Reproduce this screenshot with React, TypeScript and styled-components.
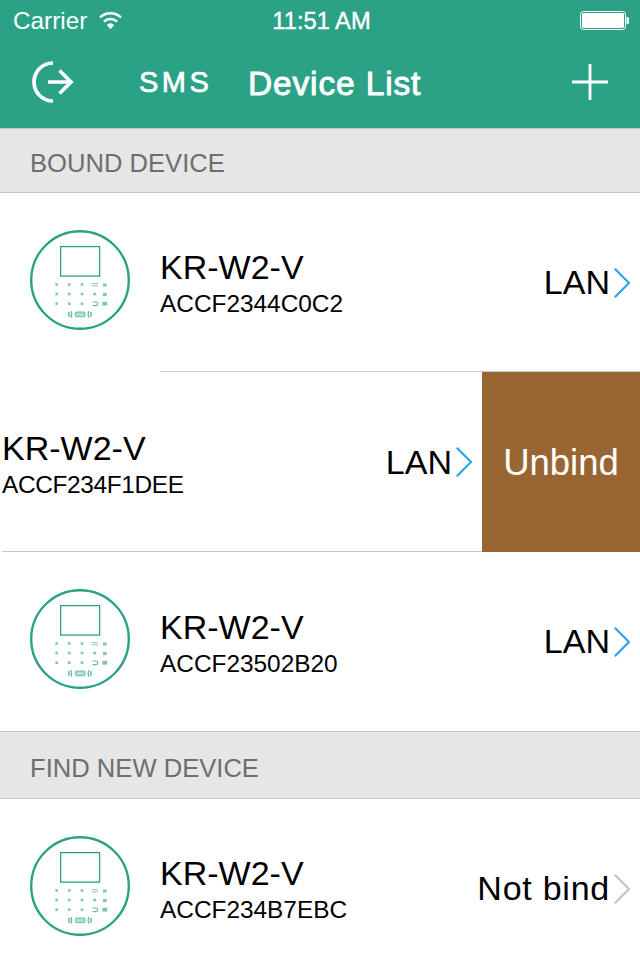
import * as React from 'react';
import styled, { createGlobalStyle } from 'styled-components';

const GlobalStyle = createGlobalStyle`
  html, body {
    margin: 0;
    padding: 0;
    background: #fff;
    font-family: "Liberation Sans", Arial, sans-serif;
  }
  * { box-sizing: border-box; }
`;

const Page = styled.div`
  width: 640px;
  height: 960px;
  overflow: hidden;
  background: #fff;
`;

const Header = styled.header`
  height: 128px;
  background: #2ba285;
  color: #fff;
  display: flex;
  flex-direction: column;
`;

const StatusBar = styled.div`
  height: 40px;
  display: grid;
  grid-template-columns: 1fr auto 1fr;
  align-items: center;
  padding: 2px 10px 0 13px;
  font-size: 24.3px;
`;

const Carrier = styled.div`
  display: flex;
  align-items: center;
  gap: 11px;
`;

const Clock = styled.div`
  font-size: 23.7px;
  -webkit-text-stroke: 0.4px #fff;
`;

const BatteryWrap = styled.div`
  justify-self: end;
  display: flex;
`;

const NavBar = styled.div`
  height: 88px;
  display: flex;
  align-items: center;
  padding: 0 32px 0 30px;
`;

const NavIcon = styled.div<{ $lift: number }>`
  display: flex;
  margin-bottom: ${p => p.$lift}px;
`;

const SmsLabel = styled.div`
  margin: 0 0 4px 65px;
  width: 110px;
  font-size: 29px;
  letter-spacing: 3.5px;
  -webkit-text-stroke: 0.7px #fff;
`;

const Title = styled.div`
  font-size: 33.5px;
  letter-spacing: 0.85px;
  flex: 1;
  margin-left: -1px;
  -webkit-text-stroke: 0.9px #fff;
`;

const SectionHead = styled.div<{ $height: number }>`
  height: ${p => p.$height}px;
  background: #e6e6e6;
  border-top: 1px solid #c8c8c8;
  border-bottom: 1px solid #c8c8c8;
  color: #6e6e6e;
  font-size: 25.6px;
  padding: 6px 0 0 30px;
  display: flex;
  align-items: center;
`;

const Row = styled.div<{ $height: number }>`
  height: ${p => p.$height}px;
  display: flex;
  overflow: hidden;
`;

const RowBody = styled.div<{ $swiped?: boolean; $line?: boolean }>`
  flex: 0 0 640px;
  margin-left: ${p => (p.$swiped ? -158 : 0)}px;
  position: relative;
  display: flex;
  align-items: center;
  padding-left: 30px;
  padding-right: 10px;
  ${p => p.$line && `
    &::after {
      content: "";
      position: absolute;
      left: 160px;
      right: 0;
      bottom: 0;
      height: 1px;
      background: #c8c8c8;
    }
  `}
`;

const DeviceIcon = styled.div`
  flex: 0 0 100px;
  display: flex;
  margin-bottom: 6px;
`;

const Info = styled.div<{ $drop: number }>`
  margin-left: 30px;
  padding-top: ${p => p.$drop * 2}px;
  flex: 1;
  color: #000;
`;

const Name = styled.div`
  font-size: 34px;
  line-height: 38px;
`;

const Mac = styled.div<{ $tight?: boolean }>`
  font-size: 24.4px;
  line-height: 28px;
  margin-top: 4px;
  letter-spacing: ${p => (p.$tight ? -0.33 : 0)}px;
`;

const Status = styled.div<{ $wide?: boolean }>`
  font-size: 34px;
  letter-spacing: ${p => (p.$wide ? 0.75 : 0)}px;
  color: #000;
  margin-right: 4px;
`;

const UnbindAction = styled.div`
  flex: 0 0 158px;
  padding-top: 2px;
  background: #996633;
  color: #fff;
  font-size: 36.5px;
  display: flex;
  align-items: center;
  justify-content: center;
`;

const Wifi = () => (
  <svg width="25" height="20" viewBox="0 0 25 20">
    <path d="M12.5 18.2 L8.8 14 A5.6 5.6 0 0 1 16.2 14 Z" fill="#fff" />
    <path d="M5.8 10.6 A10 10 0 0 1 19.2 10.6" fill="none" stroke="#fff" strokeWidth="2.3" />
    <path d="M2 6.4 A15.4 15.4 0 0 1 23 6.4" fill="none" stroke="#fff" strokeWidth="2.3" />
  </svg>
);

const Battery = () => (
  <svg width="50" height="20" viewBox="0 0 50 20">
    <rect x="0.5" y="0.5" width="45" height="18" rx="3" fill="none" stroke="#fff" strokeWidth="1" />
    <rect x="2" y="2" width="42" height="15" rx="1.5" fill="#fff" />
    <path d="M46.5 6 h1 a1.5 1.5 0 0 1 1.5 1.5 v4 a1.5 1.5 0 0 1 -1.5 1.5 h-1 z" fill="#fff" />
  </svg>
);

const LogoutIcon = () => (
  <svg width="44" height="44" viewBox="0 0 44 44">
    <path d="M23 3 A19 19 0 0 0 23 41" fill="none" stroke="#fff" strokeWidth="3.7" />
    <path d="M18 22 H41 M29.5 10.5 L41 22 L29.5 33.5" fill="none" stroke="#fff" strokeWidth="3.7" />
  </svg>
);

const PlusIcon = () => (
  <svg width="36" height="36" viewBox="0 0 36 36">
    <path d="M18 0 V36 M0 18 H36" stroke="#fff" strokeWidth="2.8" />
  </svg>
);

const Chevron = ({ color }: { color: string }) => (
  <svg width="16" height="30" viewBox="0 0 16 30">
    <path d="M0.8 0.8 L15 15 L0.8 29.2" fill="none" stroke={color} strokeWidth="2.2" />
  </svg>
);

const rowYs = [284.5, 294, 303.7];
const colXs = [56.7, 69.3, 82];

const PanelIcon = () => (
  <svg width="100" height="100" viewBox="30 230 100 100">
    <circle cx="80" cy="280" r="48.8" fill="#fff" stroke="#2ba285" strokeWidth="2.4" />
    <rect x="60.6" y="246.6" width="39" height="29.5" fill="none" stroke="#2ba285" strokeWidth="1.3" />
    <g fill="#2ba285" opacity="0.6">
      {rowYs.map(y =>
        colXs.map(x => <rect key={`${x}-${y}`} x={x - 1.3} y={y - 1.3} width="2.6" height="2.6" />)
      )}
      <rect x="91.5" y="283.2" width="6.5" height="0.9" />
      <rect x="91.5" y="285.4" width="6.5" height="0.9" />
      <rect x="93.2" y="292.8" width="3" height="2.6" />
      <rect x="103" y="283.5" width="3.6" height="3" />
      <rect x="103" y="293" width="3.6" height="3" />
      <rect x="102.4" y="301.8" width="4.8" height="3.8" />
    </g>
    <rect x="75.5" y="312" width="9.5" height="4.8" rx="1" fill="#2ba285" fillOpacity="0.35" stroke="#2ba285" strokeOpacity="0.8" strokeWidth="0.8" />
    <g fill="none" stroke="#2ba285" strokeWidth="1.1" opacity="0.75">
      <path d="M92.6 302 H96 A1.8 1.8 0 0 1 96 305.6 H92.6" />
      <path d="M70.8 311 Q72.7 314.4 70.8 317.8" />
      <path d="M89 311 Q87.1 314.4 89 317.8" />
    </g>
    <g fill="#2ba285" opacity="0.75">
      <rect x="68.2" y="312" width="1.5" height="4.8" />
      <rect x="90.2" y="312" width="1.5" height="4.8" />
    </g>
  </svg>
);

type Device = {
  name: string;
  mac: string;
  status: string;
  chevron: string;
  height: number;
  drop?: number;
  line?: boolean;
  swiped?: boolean;
  tight?: boolean;
  wide?: boolean;
};

const DeviceRow = ({ name, mac, status, chevron, height, drop = 0, line, swiped, tight, wide }: Device) => (
  <Row $height={height}>
    <RowBody $swiped={swiped} $line={line}>
      <DeviceIcon>
        <PanelIcon />
      </DeviceIcon>
      <Info $drop={drop}>
        <Name>{name}</Name>
        <Mac $tight={tight}>{mac}</Mac>
      </Info>
      <Status $wide={wide}>{status}</Status>
      <Chevron color={chevron} />
    </RowBody>
    {swiped && <UnbindAction>Unbind</UnbindAction>}
  </Row>
);

const BLUE = '#2aa4ee';
const GREY = '#c4c4c4';

export default function App() {
  return (
    <Page>
      <GlobalStyle />
      <Header>
        <StatusBar>
          <Carrier>
            Carrier
            <Wifi />
          </Carrier>
          <Clock>11:51 AM</Clock>
          <BatteryWrap>
            <Battery />
          </BatteryWrap>
        </StatusBar>
        <NavBar>
          <NavIcon $lift={4}>
            <LogoutIcon />
          </NavIcon>
          <SmsLabel>SMS</SmsLabel>
          <Title>Device List</Title>
          <NavIcon $lift={5}>
            <PlusIcon />
          </NavIcon>
        </NavBar>
      </Header>
      <SectionHead $height={65}>BOUND DEVICE</SectionHead>
      <DeviceRow name="KR-W2-V" mac="ACCF2344C0C2" status="LAN" chevron={BLUE} height={179} line />
      <DeviceRow name="KR-W2-V" mac="ACCF234F1DEE" status="LAN" chevron={BLUE} height={180} drop={2} line swiped tight />
      <DeviceRow name="KR-W2-V" mac="ACCF23502B20" status="LAN" chevron={BLUE} height={179} drop={1} />
      <SectionHead $height={68}>FIND NEW DEVICE</SectionHead>
      <DeviceRow name="KR-W2-V" mac="ACCF234B7EBC" status="Not bind" chevron={GREY} height={179} wide />
    </Page>
  );
}
